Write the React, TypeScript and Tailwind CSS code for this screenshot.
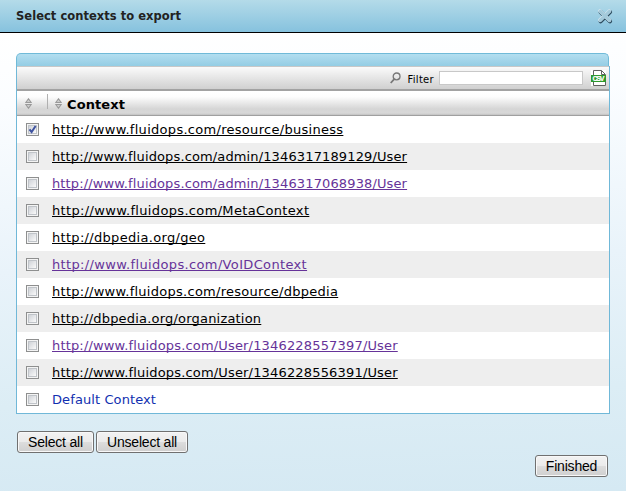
import React from "react";

type Row = { label: string; kind: "link" | "visited" | "plain"; tracking: string; checked?: boolean };

const rows: Row[] = [
  { label: "http://www.fluidops.com/resource/business", kind: "link", tracking: "tracking-[0.29px]", checked: true },
  { label: "http://www.fluidops.com/admin/1346317189129/User", kind: "link", tracking: "tracking-[0.13px]" },
  { label: "http://www.fluidops.com/admin/1346317068938/User", kind: "visited", tracking: "tracking-[0.13px]" },
  { label: "http://www.fluidops.com/MetaContext", kind: "link", tracking: "tracking-[0.34px]" },
  { label: "http://dbpedia.org/geo", kind: "link", tracking: "tracking-[0.31px]" },
  { label: "http://www.fluidops.com/VoIDContext", kind: "visited", tracking: "tracking-[0.35px]" },
  { label: "http://www.fluidops.com/resource/dbpedia", kind: "link", tracking: "tracking-[0.27px]" },
  { label: "http://dbpedia.org/organization", kind: "link", tracking: "tracking-[0.2px]" },
  { label: "http://www.fluidops.com/User/1346228557397/User", kind: "visited", tracking: "tracking-[0.17px]" },
  { label: "http://www.fluidops.com/User/1346228556391/User", kind: "link", tracking: "tracking-[0.17px]" },
  { label: "Default Context", kind: "plain", tracking: "tracking-[0.1px]" },
];

const tones = {
  link: "text-black underline",
  visited: "text-[#663399] underline",
  plain: "text-[#1130b0]",
};

function SortIcon() {
  return (
    <svg className="block h-[11px] w-[7px]" viewBox="0 0 7 11">
      <path d="M3.5 .8 6.2 4.5H.8zM.8 6.5h5.4L3.5 10.2z" fill="#ccc" stroke="#999" strokeWidth="1.1" />
    </svg>
  );
}

function Checkbox({ checked }: { checked?: boolean }) {
  return (
    <span className="block h-[13px] w-[13px] shrink-0 border border-[#8e8f8f] bg-[#f4f4f4] p-px">
      <span className="block h-[9px] w-[9px] border border-[#c0c4c9] bg-linear-to-br from-[#d0d3d8] to-[#fafafa]">
        {checked && (
          <svg className="block h-[7px] w-[7px] overflow-visible" viewBox="0 0 7 7">
            <path d="M.5 3.4 2.6 6 6.6 0" fill="none" stroke="#3f53a0" strokeWidth="2" />
          </svg>
        )}
      </span>
    </span>
  );
}

function Button({ className, children }: { className: string; children: string }) {
  return (
    <button
      className={
        "flex h-[22px] items-center justify-center rounded-[3px] border border-[#707070] bg-[linear-gradient(#f2f2f2_0%,#ebebeb_49%,#dddddd_50%,#cfcfcf_100%)] font-['Liberation_Sans',Arial,sans-serif] text-[14px] leading-[20px] tracking-[-0.2px] whitespace-nowrap text-black shadow-[inset_0_0_0_1px_#f8f8f8] " +
        className
      }
    >
      {children}
    </button>
  );
}

function CloseIcon() {
  return (
    <svg className="block h-[18px] w-[18px]" viewBox="0 0 18 18" fill="none" strokeLinecap="round">
      <path d="M4 4 13.4 13.2M13.4 4 4 13.2" stroke="#2c4c60" strokeWidth="4.2" transform="translate(.6 1)" />
      <path d="M4 4 13.4 13.2M13.4 4 4 13.2" stroke="#d3e4ed" strokeWidth="3.8" />
      <path d="M4.3 4.4 13.5 13.4M13.5 4.4 4.3 13.4" stroke="#a3c9da" strokeWidth="3.1" />
    </svg>
  );
}

function CsvIcon() {
  return (
    <svg className="block h-[16px] w-[15px]" viewBox="0 0 15 16">
      <path d="M0 0h15v16H0z" fill="#fff" />
      <path d="M2.5 5V.5h8l4 4M2.5 12v3.5h12V12M10.5 .5v4h4" fill="none" stroke="#606060" />
      <path d="M0 5h15v7H0z" fill="#2d992d" />
      <text x="1.5" y="11" fill="#fff" stroke="#fff" strokeWidth=".2" fontSize="7" fontWeight="700" textLength="12" lengthAdjust="spacing" className="font-['Liberation_Sans_Narrow','Liberation_Sans',sans-serif]">CSV</text>
    </svg>
  );
}

export default function App() {
  return (
    <div className="flex h-[491px] w-[626px] flex-col overflow-hidden bg-[#d5e9f3] font-['DejaVu_Sans',Verdana,sans-serif]">
      <header className="flex h-[33px] shrink-0 items-center justify-between border-b border-black bg-linear-to-b from-[#b4dbe9] to-[#86c2de] pr-[12px] pl-[16px]">
        <h1 className="pb-px text-[11.5px] leading-[16px] font-bold tracking-[0.04px] text-[#222]">Select contexts to export</h1>
        <CloseIcon />
      </header>
      <main className="flex grow flex-col bg-[linear-gradient(178deg,#ffffff_0%,#fbfdff_15%,#e9f3fa_50%,#dcedf5_78%,#d5e9f3_100%)] px-[16px] pt-[20px]">
        <div className="mr-px h-[13px] shrink-0 rounded-t-[5px] border border-b-0 border-[#70bad8] bg-linear-to-b from-[#b3def0] to-[#94cde4]" />
        <section className="border border-t-0 border-[#70b8d8] bg-white">
          <div className="flex h-[25px] items-center justify-end border-t border-b-2 border-t-[#c8c8c8] border-b-[#a2a2a2] bg-linear-to-b from-[#fbfbfb] to-[#d0d0d0] pr-[3px]">
            <svg className="mr-[6px] h-[12px] w-[11px]" viewBox="0 0 11 12" fill="none" stroke="#777">
              <circle cx="6.6" cy="4.4" r="3.4" strokeWidth="1.3" />
              <path d="M4.2 7.2 .7 11" strokeWidth="1.8" />
            </svg>
            <label htmlFor="filter" className="mr-[5px] pt-[3px] text-[10px] leading-[14px] tracking-[0.3px] text-black">Filter</label>
            <input id="filter" className="mr-[8px] h-[14px] w-[144px] border border-[#c8c8c8] bg-white text-[10px] outline-none" />
            <CsvIcon />
          </div>
          <div className="flex h-[25px] items-center border-b border-[#a0a0a0] bg-[linear-gradient(#ffffff_0%,#fcfcfc_25%,#d5d5d5_75%,#d8d8d8_92%,#c2c2c2_100%)] pl-[8px]">
            <SortIcon />
            <span className="mt-[3px] mr-[7px] ml-[15px] h-[15px] w-px self-start bg-[#b0b0b0]" />
            <SortIcon />
            <span className="ml-[5px] pt-[3px] text-[13px] leading-[18px] font-bold tracking-[0.1px] text-black">Context</span>
          </div>
          <ul>
            {rows.map((row) => (
              <li key={row.label} className="flex h-[27px] items-center bg-white pl-[9px] even:bg-[#eeeeee]">
                <Checkbox checked={row.checked} />
                <span
                  className={
                    "ml-[13px] text-[13px] leading-[18px] whitespace-nowrap underline-offset-1 decoration-1 [text-decoration-skip-ink:none] " +
                    row.tracking + " " + tones[row.kind]
                  }
                >
                  {row.label}
                </span>
              </li>
            ))}
          </ul>
        </section>
        <div className="mt-[17px] ml-px flex gap-[2px]">
          <Button className="w-[77px]">Select all</Button>
          <Button className="w-[92px]">Unselect all</Button>
        </div>
        <div className="mt-[2px] mr-[2px] flex justify-end">
          <Button className="w-[73px]">Finished</Button>
        </div>
      </main>
    </div>
  );
}
